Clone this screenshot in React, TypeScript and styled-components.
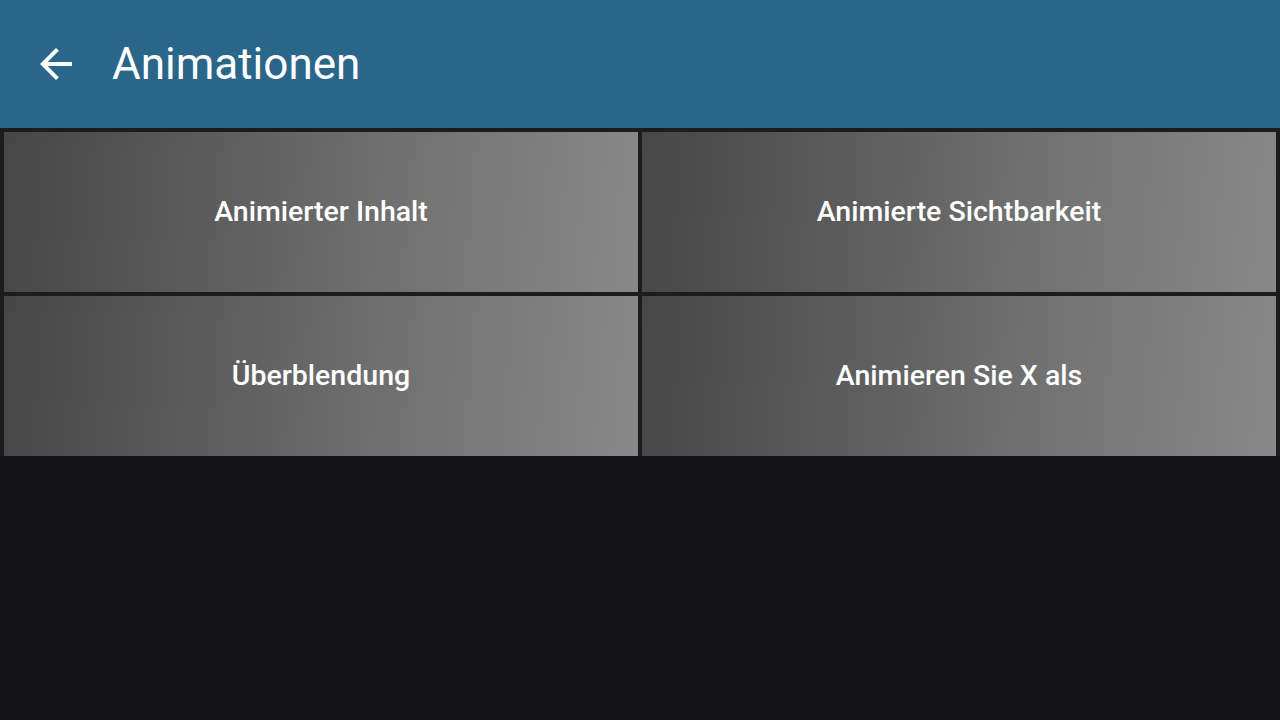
import React from 'react';
import styled, { createGlobalStyle } from 'styled-components';

const GlobalStyle = createGlobalStyle`
  html, body {
    margin: 0;
    padding: 0;
    background: #131217;
    font-family: Roboto, "Noto Sans", sans-serif;
  }
`;

const Screen = styled.div`
  width: 1280px;
  height: 720px;
  background: #131217;
  display: flex;
  flex-direction: column;
`;

const TopBar = styled.header`
  height: 128px;
  background: #2a6689;
  display: flex;
  align-items: center;
  padding-left: 32px;
  gap: 32px;
  color: #ffffff;
`;

const BackButton = styled.button`
  width: 48px;
  height: 48px;
  padding: 0;
  border: none;
  background: none;
  color: #ffffff;
  display: flex;
  align-items: center;
  justify-content: center;
`;

const Title = styled.h1`
  margin: 0;
  font-size: 44px;
  font-weight: 400;
  line-height: 1;
`;

const Grid = styled.div`
  display: grid;
  grid-template-columns: 1fr 1fr;
  grid-auto-rows: 160px;
  gap: 4px;
  padding: 4px 4px 0;
  background: #1c1c1f;
`;

const Tile = styled.button`
  border: none;
  padding: 0 0 2px;
  background: linear-gradient(95deg, #474747 0%, #5e5e5e 35%, #777777 70%, #888888 100%);
  color: #ffffff;
  font-family: Roboto, "Noto Sans", sans-serif;
  font-size: 28.5px;
  font-weight: 500;
  display: flex;
  align-items: center;
  justify-content: center;
`;

const items = [
  'Animierter Inhalt',
  'Animierte Sichtbarkeit',
  'Überblendung',
  'Animieren Sie X als',
];

export default function App() {
  return (
    <Screen>
      <GlobalStyle />
      <TopBar>
        <BackButton aria-label="Zurück">
          <svg width="48" height="48" viewBox="0 0 24 24" fill="currentColor">
            <path d="M20 11H7.83l5.59-5.59L12 4l-8 8 8 8 1.41-1.41L7.83 13H20v-2z" />
          </svg>
        </BackButton>
        <Title>Animationen</Title>
      </TopBar>
      <Grid>
        {items.map((label) => (
          <Tile key={label}>{label}</Tile>
        ))}
      </Grid>
    </Screen>
  );
}
